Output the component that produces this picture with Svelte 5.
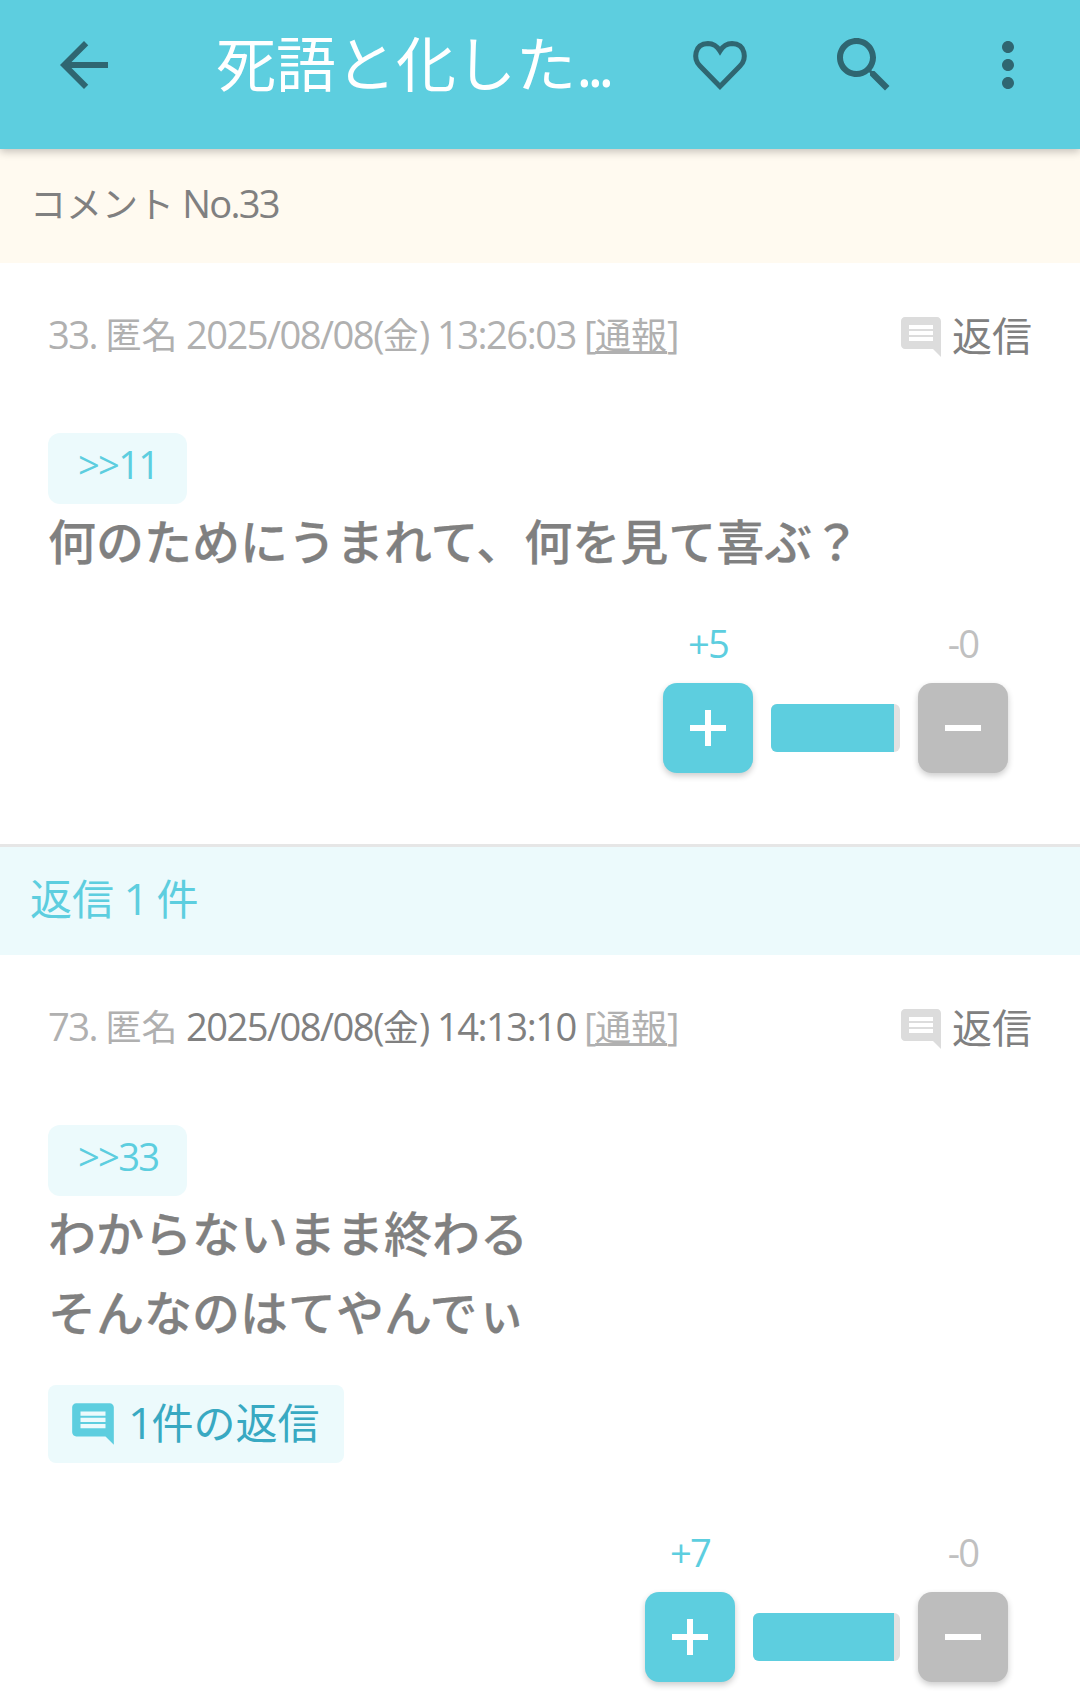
<script>
  const comments = [
    {
      no: 33, date: '2025/08/08(金) 13:26:03', recent: false,
      anchor: '>>11', lines: ['何のためにうまれて、何を見て喜ぶ？'],
      replies: 0, plus: 5, minus: 0, barWidth: 129, fillWidth: 123
    },
    {
      no: 73, date: '2025/08/08(金) 14:13:10', recent: true,
      anchor: '>>33', lines: ['わからないまま終わる', 'そんなのはてやんでぃ'],
      replies: 1, plus: 7, minus: 0, barWidth: 147, fillWidth: 141
    }
  ];
  const bubble = 'M21.99 4c0-1.1-.89-2-1.99-2H4c-1.1 0-2 .9-2 2v12c0 1.1.9 2 2 2h14l4 4-.01-18zM18 14H6v-2h12v2zm0-3H6V9h12v2zm0-3H6V6h12v2z';

  // Splits a string into Latin and CJK runs so that Latin gets its tighter setting.
  const runs = (text) =>
    String(text).match(/[\x20-\x7e]+|[^\x20-\x7e]+/g).map((t) => ({
      t,
      latin: /^[\x20-\x7e]/.test(t)
    }));
</script>

{#snippet mixed(text)}{#each runs(text) as r}<span class:lat={r.latin}>{r.t}</span>{/each}{/snippet}

<div class="page">
  <header class="appbar">
    <button class="icon-btn back" aria-label="戻る">
      <svg viewBox="0 0 24 24"><path d="M20 11H7.83l5.59-5.59L12 4l-8 8 8 8 1.41-1.41L7.83 13H20v-2z" /></svg>
    </button>
    <h1 class="title">{@render mixed('死語と化した...')}</h1>
    <button class="icon-btn" aria-label="お気に入り">
      <svg viewBox="0 0 72 72"><path class="heart" d="M36 57.5 16 37C9 30 10 15 24 14.5c5 0 9 2.500 12 7.500 3-5 7-7.500 12-7.500C62 15 63 30 56 37z" /></svg>
    </button>
    <button class="icon-btn" aria-label="検索">
      <svg viewBox="0 0 24 24"><path d="M15.5 14h-.79l-.28-.27C15.41 12.59 16 11.11 16 9.5 16 5.91 13.09 3 9.5 3S3 5.91 3 9.5 5.91 16 9.5 16c1.61 0 3.09-.59 4.23-1.57l.27.28v.79l5 4.99L20.49 19l-4.99-5zm-6 0C7.01 14 5 11.99 5 9.5S7.01 5 9.5 5 14 7.01 14 9.5 11.99 14 9.5 14z" /></svg>
    </button>
    <button class="icon-btn" aria-label="メニュー">
      <svg viewBox="0 0 24 24"><path d="M12 8c1.1 0 2-.9 2-2s-.9-2-2-2-2 .9-2 2 .9 2 2 2zm0 2c-1.1 0-2 .9-2 2s.9 2 2 2 2-.9 2-2-.9-2-2-2zm0 6c-1.1 0-2 .9-2 2s.9 2 2 2 2-.9 2-2-.9-2-2-2z" /></svg>
    </button>
  </header>

  <div class="band notice"><span>{@render mixed('コメント No.33')}</span></div>

  {#each comments as c, i}
    <article class="comment" class:first={i === 0}>
      <div class="meta">
        <span class="info">{@render mixed(`${c.no}. 匿名 `)}<span class:recent={c.recent}>{@render mixed(c.date)}</span>{@render mixed(' [')}<span class="report">通報</span>{@render mixed(']')}</span>
        <span class="reply">
          <svg viewBox="0 0 24 24"><path d={bubble} /></svg><span class="reply-label">返信</span>
        </span>
      </div>

      <div class="anchor">{@render mixed(c.anchor)}</div>
      <div class="body">
        {#each c.lines as line}<p>{line}</p>{/each}
      </div>

      {#if c.replies}
        <div class="replies">
          <svg viewBox="0 0 24 24"><path d={bubble} /></svg><span class="replies-label">{@render mixed(`${c.replies}件の返信`)}</span>
        </div>
      {/if}

      <div class="votes">
        <div class="vote up">
          <span class="count">{@render mixed(`+${c.plus}`)}</span>
          <button class="square" aria-label="プラス">
            <svg viewBox="0 0 36 36"><path d="M15 0h6v15h15v6H21v15h-6V21H0v-6h15z" /></svg>
          </button>
        </div>
        <div class="bar" style="width: {c.barWidth}px">
          <div class="fill" style="width: {c.fillWidth}px"></div>
        </div>
        <div class="vote down">
          <span class="count">{@render mixed(`-${c.minus}`)}</span>
          <button class="square" aria-label="マイナス">
            <svg viewBox="0 0 36 36"><path d="M0 15h36v6H0z" /></svg>
          </button>
        </div>
      </div>
    </article>

    {#if i === 0}
      <div class="band replies-head"><span>{@render mixed('返信 1 件')}</span></div>
    {/if}
  {/each}
</div>

<style>
  :global(body) {
    margin: 0;
    background: #fff;
  }
  .page {
    width: 1080px;
    height: 1708px;
    overflow: hidden;
    font-family: "Noto Sans CJK JP", "Noto Sans", sans-serif;
    color: #808080;
  }
  .lat {
    font-family: "Open Sans", "Noto Sans", sans-serif;
    font-size: 1.06em;
    letter-spacing: -0.045em;
  }
  .appbar {
    position: relative;
    z-index: 1;
    height: 149px;
    box-sizing: border-box;
    padding-bottom: 19px;
    display: flex;
    align-items: center;
    background: #5dcedf;
    box-shadow: 0 3px 8px rgba(0, 0, 0, 0.22);
  }
  .icon-btn {
    flex: none;
    width: 144px;
    height: 72px;
    padding: 0;
    border: 0;
    background: none;
    display: flex;
    justify-content: center;
  }
  .icon-btn svg {
    width: 72px;
    height: 72px;
    fill: #2f6671;
  }
  .icon-btn .heart {
    fill: none;
    stroke: #2f6671;
    stroke-width: 5;
  }
  .back {
    width: 168px;
  }
  .title {
    flex: 1;
    margin: 0;
    padding: 0 0 6px 48px;
    font-size: 60px;
    font-weight: 400;
    line-height: 72px;
    color: #fff;
    white-space: nowrap;
  }
  .title .lat {
    letter-spacing: -0.09em;
  }
  .band {
    box-sizing: border-box;
    display: flex;
    align-items: center;
    padding-left: 30px;
  }
  .band > span {
    padding-bottom: 8px;
  }
  .notice {
    height: 114px;
    background: #fffaf0;
    font-size: 36px;
    color: #808080;
  }
  .replies-head {
    height: 108px;
    background: #ecfafc;
    font-size: 42px;
    color: #5dcedf;
  }
  .comment {
    padding: 44px 48px 0;
    height: 582px;
    box-sizing: border-box;
  }
  .comment.first {
    height: 584px;
    border-bottom: 3px solid #e6e6e6;
  }
  .meta {
    height: 60px;
    display: flex;
    align-items: center;
    justify-content: space-between;
    font-size: 36px;
    color: #b0b0b0;
    white-space: pre;
  }
  .meta .lat {
    letter-spacing: -0.04em;
  }
  .info {
    padding-bottom: 7px;
  }
  .recent {
    color: #808080;
  }
  .report {
    text-decoration: underline;
  }
  .reply {
    display: flex;
    align-items: center;
    gap: 7px;
    font-size: 40px;
    color: #808080;
  }
  .reply-label {
    padding-bottom: 7px;
  }
  .reply svg {
    width: 48px;
    height: 48px;
    fill: #dcdcdc;
  }
  .anchor {
    width: 139px;
    height: 71px;
    margin-top: 66px;
    border-radius: 12px;
    box-sizing: border-box;
    padding-left: 30px;
    background: #ecfafc;
    color: #5dcedf;
    font-size: 36px;
    line-height: 60px;
  }
  .body {
    font-size: 48px;
    font-weight: 500;
    -webkit-text-stroke: 0.25px #808080;
    line-height: 79px;
    margin-top: -4px;
  }
  .body p {
    margin: 0;
  }
  .replies {
    width: 296px;
    height: 78px;
    margin: 35px 0 59px;
    box-sizing: border-box;
    padding-left: 20px;
    display: flex;
    align-items: center;
    gap: 10px;
    border-radius: 8px;
    background: #ecfafc;
    color: #38a9c2;
    font-size: 42px;
  }
  .replies-label {
    padding-bottom: 7px;
  }
  .replies svg {
    width: 50px;
    height: 50px;
    fill: #5dcedf;
  }
  .votes {
    display: flex;
    align-items: center;
    justify-content: flex-end;
    gap: 18px;
    margin-top: 34px;
    padding-right: 24px;
  }
  .vote {
    width: 90px;
    display: flex;
    flex-direction: column;
    align-items: center;
    gap: 12px;
  }
  .count {
    font-size: 36px;
    line-height: 58px;
    height: 58px;
  }
  .up .count {
    color: #5dcedf;
  }
  .down .count {
    color: #c0c0c0;
  }
  .square {
    width: 90px;
    height: 90px;
    padding: 0;
    border: 0;
    border-radius: 14px;
    display: flex;
    align-items: center;
    justify-content: center;
    box-shadow: 0 3px 6px rgba(0, 0, 0, 0.2);
  }
  .square svg {
    width: 36px;
    height: 36px;
    fill: #fff;
  }
  .up .square {
    background: #5dcedf;
  }
  .down .square {
    background: #bdbdbd;
  }
  .bar {
    height: 48px;
    margin-top: 70px;
    border-radius: 6px;
    overflow: hidden;
    background: #e2e2e2;
  }
  .fill {
    height: 100%;
    background: #5dcedf;
  }
</style>
